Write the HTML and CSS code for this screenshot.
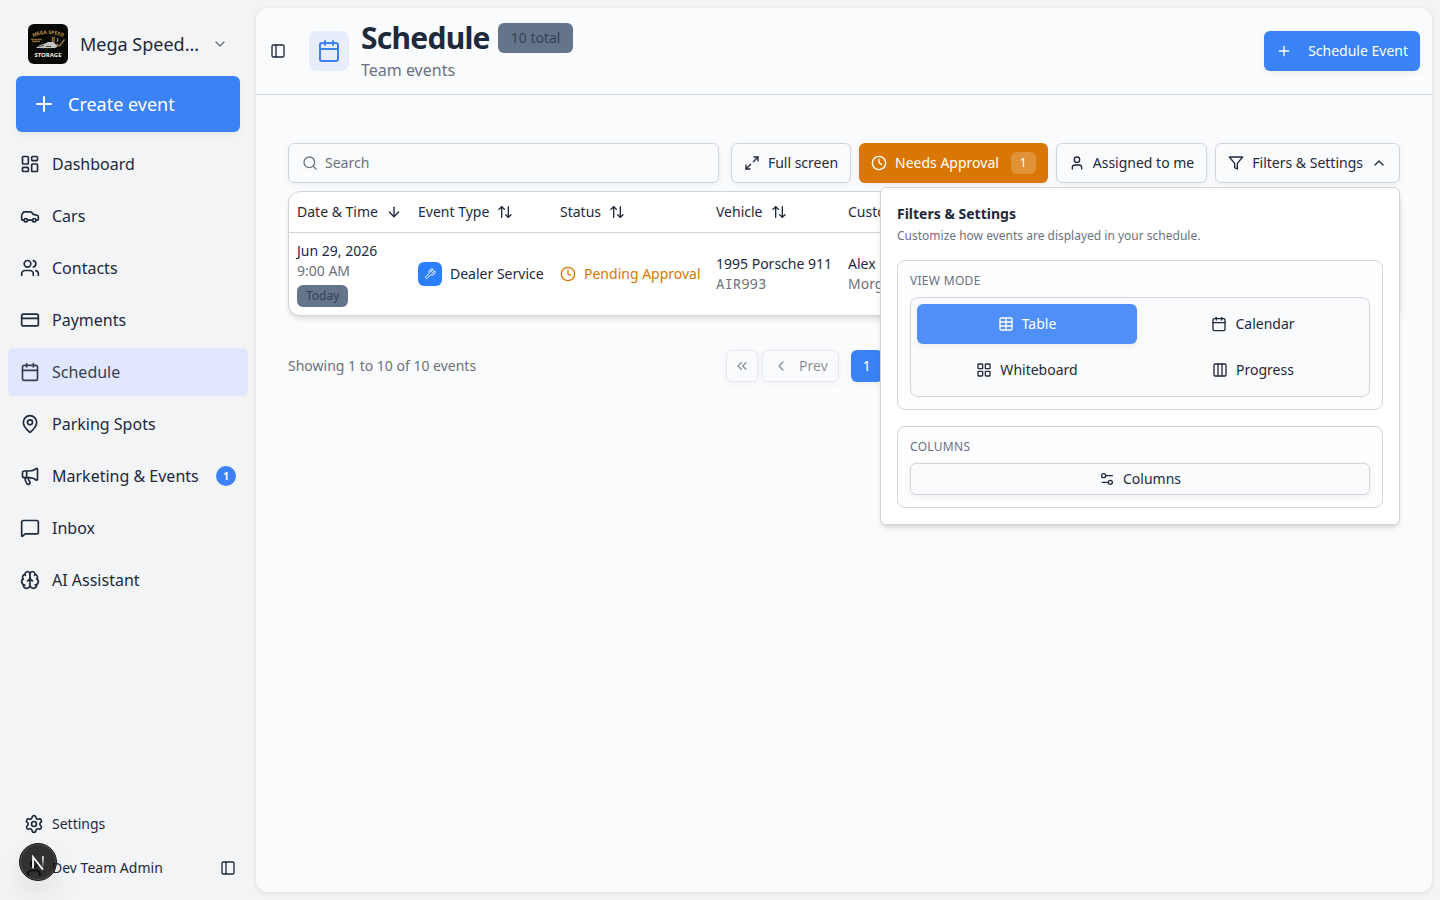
FILE: index.html
```html
<!DOCTYPE html>
<html lang="en">
<head>
<meta charset="utf-8">
<meta name="viewport" content="width=device-width, initial-scale=1">
<title>Schedule</title>
<link rel="stylesheet" href="styles.css">
</head>
<body>
<svg class="sprite" aria-hidden="true">
  <symbol id="chevron-down" viewBox="0 0 24 24"><path d="m6 9 6 6 6-6"/></symbol>
  <symbol id="chevron-up" viewBox="0 0 24 24"><path d="m18 15-6-6-6 6"/></symbol>
  <symbol id="chevron-left" viewBox="0 0 24 24"><path d="m15 18-6-6 6-6"/></symbol>
  <symbol id="chevrons-left" viewBox="0 0 24 24"><path d="m11 17-5-5 5-5"/><path d="m18 17-5-5 5-5"/></symbol>
  <symbol id="plus" viewBox="0 0 24 24"><path d="M5 12h14"/><path d="M12 5v14"/></symbol>
  <symbol id="dashboard" viewBox="0 0 24 24"><rect width="7" height="9" x="3" y="3" rx="1"/><rect width="7" height="5" x="14" y="3" rx="1"/><rect width="7" height="9" x="14" y="12" rx="1"/><rect width="7" height="5" x="3" y="16" rx="1"/></symbol>
  <symbol id="car" viewBox="0 0 24 24"><path d="M19 17h2c.6 0 1-.4 1-1v-3c0-.9-.7-1.7-1.5-1.9C18.7 10.6 16 10 16 10s-1.3-1.4-2.2-2.3c-.5-.4-1.1-.7-1.8-.7H5c-.6 0-1.1.4-1.4.9l-1.4 2.9A3.7 3.7 0 0 0 2 12v4c0 .6.4 1 1 1h2"/><circle cx="7" cy="17" r="2"/><path d="M9 17h6"/><circle cx="17" cy="17" r="2"/></symbol>
  <symbol id="users" viewBox="0 0 24 24"><path d="M16 21v-2a4 4 0 0 0-4-4H6a4 4 0 0 0-4 4v2"/><circle cx="9" cy="7" r="4"/><path d="M22 21v-2a4 4 0 0 0-3-3.87"/><path d="M16 3.13a4 4 0 0 1 0 7.75"/></symbol>
  <symbol id="card" viewBox="0 0 24 24"><rect width="20" height="14" x="2" y="5" rx="2"/><path d="M2 10h20"/></symbol>
  <symbol id="calendar" viewBox="0 0 24 24"><path d="M8 2v4"/><path d="M16 2v4"/><rect width="18" height="18" x="3" y="4" rx="2"/><path d="M3 10h18"/></symbol>
  <symbol id="pin" viewBox="0 0 24 24"><path d="M20 10c0 4.993-5.539 10.193-7.399 11.799a1 1 0 0 1-1.202 0C9.539 20.193 4 14.993 4 10a8 8 0 0 1 16 0"/><circle cx="12" cy="10" r="3"/></symbol>
  <symbol id="megaphone" viewBox="0 0 24 24"><path d="M11 6a13 13 0 0 0 8.4-2.8A1 1 0 0 1 21 4v12a1 1 0 0 1-1.6.8A13 13 0 0 0 11 14H5a2 2 0 0 1-2-2V8a2 2 0 0 1 2-2z"/><path d="M6 14a12 12 0 0 0 2.4 7.2 2 2 0 0 0 3.2-2.4A8 8 0 0 1 10 14"/><path d="M8 6v8"/></symbol>
  <symbol id="message" viewBox="0 0 24 24"><path d="M22 17a2 2 0 0 1-2 2H6.828a2 2 0 0 0-1.414.586l-2.202 2.202A.71.71 0 0 1 2 21.286V5a2 2 0 0 1 2-2h16a2 2 0 0 1 2 2z"/></symbol>
  <symbol id="brain" viewBox="0 0 24 24"><path d="M12 18V5"/><path d="M15 13a4.17 4.17 0 0 1-3-4 4.17 4.17 0 0 1-3 4"/><path d="M17.598 6.500A3 3 0 1 0 12 5a3 3 0 1 0-5.598 1.500"/><path d="M17.997 5.125a4 4 0 0 1 2.526 5.770"/><path d="M18 18a4 4 0 0 0 2-7.464"/><path d="M19.967 17.483A4 4 0 1 1 12 18a4 4 0 1 1-7.967-.517"/><path d="M6 18a4 4 0 0 1-2-7.464"/><path d="M6.003 5.125a4 4 0 0 0-2.526 5.770"/></symbol>
  <symbol id="gear" viewBox="0 0 24 24"><path d="M9.671 4.136a2.34 2.34 0 0 1 4.659 0 2.34 2.34 0 0 0 3.319 1.915 2.34 2.34 0 0 1 2.33 4.033 2.34 2.34 0 0 0 0 3.831 2.34 2.34 0 0 1-2.33 4.033 2.34 2.34 0 0 0-3.319 1.915 2.34 2.34 0 0 1-4.659 0 2.34 2.34 0 0 0-3.32-1.915 2.34 2.34 0 0 1-2.33-4.033 2.34 2.34 0 0 0 0-3.831A2.34 2.34 0 0 1 6.35 6.051a2.34 2.34 0 0 0 3.319-1.915"/><circle cx="12" cy="12" r="3"/></symbol>
  <symbol id="user" viewBox="0 0 24 24"><path d="M19 21v-2a4 4 0 0 0-4-4H9a4 4 0 0 0-4 4v2"/><circle cx="12" cy="7" r="4"/></symbol>
  <symbol id="panel" viewBox="0 0 24 24"><rect width="18" height="18" x="3" y="3" rx="2"/><path d="M9 3v18"/></symbol>
  <symbol id="search" viewBox="0 0 24 24"><path d="m21 21-4.34-4.34"/><circle cx="11" cy="11" r="8"/></symbol>
  <symbol id="expand" viewBox="0 0 24 24"><path d="M15 3h6v6"/><path d="m21 3-7 7"/><path d="m3 21 7-7"/><path d="M9 21H3v-6"/></symbol>
  <symbol id="clock" viewBox="0 0 24 24"><circle cx="12" cy="12" r="10"/><path d="M12 6v6l4 2"/></symbol>
  <symbol id="filter" viewBox="0 0 24 24"><path d="M22 3H2l8 9.46V19l4 2v-8.54z"/></symbol>
  <symbol id="arrow-down" viewBox="0 0 24 24"><path d="M12 5v14"/><path d="m19 12-7 7-7-7"/></symbol>
  <symbol id="sort" viewBox="0 0 24 24"><path d="m21 16-4 4-4-4"/><path d="M17 20V4"/><path d="m3 8 4-4 4 4"/><path d="M7 4v16"/></symbol>
  <symbol id="wrench" viewBox="0 0 24 24"><path d="M14.7 6.3a1 1 0 0 0 0 1.4l1.6 1.6a1 1 0 0 0 1.4 0l3.77-3.77a6 6 0 0 1-7.94 7.94l-6.91 6.91a2.12 2.12 0 0 1-3-3l6.91-6.91a6 6 0 0 1 7.94-7.94l-3.76 3.76z"/></symbol>
  <symbol id="table" viewBox="0 0 24 24"><path d="M12 3v18"/><rect width="18" height="18" x="3" y="3" rx="2"/><path d="M3 9h18"/><path d="M3 15h18"/></symbol>
  <symbol id="grid" viewBox="0 0 24 24"><rect width="7" height="7" x="3" y="3" rx="1"/><rect width="7" height="7" x="14" y="3" rx="1"/><rect width="7" height="7" x="14" y="14" rx="1"/><rect width="7" height="7" x="3" y="14" rx="1"/></symbol>
  <symbol id="columns" viewBox="0 0 24 24"><rect width="18" height="18" x="3" y="3" rx="2"/><path d="M9 3v18"/><path d="M15 3v18"/></symbol>
  <symbol id="sliders" viewBox="0 0 24 24"><path d="M20 7h-9"/><path d="M14 17H5"/><circle cx="17" cy="17" r="3"/><circle cx="7" cy="7" r="3"/></symbol>
</svg>

<aside class="sidebar">
  <button class="team" type="button">
    <svg class="team-logo" viewBox="0 0 40 40" role="img" aria-label="Mega Speed Storage">
      <defs><path id="arch" d="M2 14.500Q20 5.500 38 14.500"/></defs>
      <rect width="40" height="40" fill="#080804"/>
      <text class="logo-top"><textPath href="#arch" startOffset="50%" text-anchor="middle">MEGA SPEED</textPath></text>
      <path d="M3 15.500h11M4 17.500h8" stroke="#7d6136" stroke-width="1.400"/>
      <path d="M24.500 13v6M26 12.500v7" stroke="#9a7640" stroke-width="1.200"/>
      <path d="M36.500 15.500l-5 6.500-3-2" fill="none" stroke="#9a7640" stroke-width="1.400"/>
      <path d="M8 24q3-3.500 8-4l4-2h5l3 2.500 2 2-3 1.500z" fill="#c4c3bd"/>
      <path d="M10 22.500l6-1M18 22.500h5M12 24.500h12" stroke="#2a2924" stroke-width=".8"/>
      <path d="M29 14l1 2-1 2" fill="none" stroke="#d7d4ca" stroke-width=".8"/>
      <text class="logo-bottom" x="20" y="32.500" text-anchor="middle">STORAGE</text>
    </svg>
    <span class="team-name">Mega Speed...</span>
    <svg class="icon muted"><use href="#chevron-down"/></svg>
  </button>

  <button class="create" type="button"><svg class="icon icon-lg"><use href="#plus"/></svg>Create event</button>

  <nav class="nav">
    <a class="nav-link" href="#"><svg class="icon icon-md"><use href="#dashboard"/></svg>Dashboard</a>
    <a class="nav-link" href="#"><svg class="icon icon-md"><use href="#car"/></svg>Cars</a>
    <a class="nav-link" href="#"><svg class="icon icon-md"><use href="#users"/></svg>Contacts</a>
    <a class="nav-link" href="#"><svg class="icon icon-md"><use href="#card"/></svg>Payments</a>
    <a class="nav-link active" href="#" aria-current="page"><svg class="icon icon-md"><use href="#calendar"/></svg>Schedule</a>
    <a class="nav-link" href="#"><svg class="icon icon-md"><use href="#pin"/></svg>Parking Spots</a>
    <a class="nav-link" href="#"><svg class="icon icon-md"><use href="#megaphone"/></svg>Marketing &amp; Events<span class="count">1</span></a>
    <a class="nav-link" href="#"><svg class="icon icon-md"><use href="#message"/></svg>Inbox</a>
    <a class="nav-link" href="#"><svg class="icon icon-md"><use href="#brain"/></svg>AI Assistant</a>
  </nav>

  <footer class="side-footer">
    <a class="foot-link" href="#"><svg class="icon icon-md"><use href="#gear"/></svg>Settings</a>
    <div class="foot-row">
      <a class="foot-link" href="#"><svg class="icon icon-md"><use href="#user"/></svg>Dev Team Admin</a>
      <button class="ghost" type="button" aria-label="Collapse sidebar"><svg class="icon"><use href="#panel"/></svg></button>
    </div>
  </footer>
</aside>

<main class="main">
  <header class="header">
    <button class="ghost" type="button" aria-label="Toggle sidebar"><svg class="icon"><use href="#panel"/></svg></button>
    <span class="page-icon"><svg class="icon icon-lg"><use href="#calendar"/></svg></span>
    <div class="heading">
      <div class="title-row"><h1 class="title">Schedule</h1><span class="badge">10 total</span></div>
      <p class="subtitle">Team events</p>
    </div>
    <button class="btn primary" type="button"><svg class="icon"><use href="#plus"/></svg>Schedule Event</button>
  </header>

  <div class="content">
    <div class="toolbar">
      <label class="search"><svg class="icon"><use href="#search"/></svg><input class="search-input" type="text" placeholder="Search" aria-label="Search"></label>
      <div class="actions">
        <button class="btn outline" type="button"><svg class="icon"><use href="#expand"/></svg>Full screen</button>
        <button class="btn warn" type="button"><svg class="icon"><use href="#clock"/></svg>Needs Approval<span class="pill">1</span></button>
        <button class="btn outline" type="button"><svg class="icon"><use href="#user"/></svg>Assigned to me</button>
        <div class="filters">
          <button class="btn outline" type="button" aria-expanded="true"><svg class="icon"><use href="#filter"/></svg>Filters &amp; Settings<svg class="icon"><use href="#chevron-up"/></svg></button>
          <section class="popover" aria-label="Filters and settings">
            <div class="pop-head">
              <h2 class="pop-title">Filters &amp; Settings</h2>
              <p class="pop-text">Customize how events are displayed in your schedule.</p>
            </div>
            <div class="group">
              <h3 class="group-label">View mode</h3>
              <div class="modes">
                <button class="mode selected" type="button" aria-pressed="true"><svg class="icon"><use href="#table"/></svg>Table</button>
                <button class="mode" type="button"><svg class="icon"><use href="#calendar"/></svg>Calendar</button>
                <button class="mode" type="button"><svg class="icon"><use href="#grid"/></svg>Whiteboard</button>
                <button class="mode" type="button"><svg class="icon"><use href="#columns"/></svg>Progress</button>
              </div>
            </div>
            <div class="group">
              <h3 class="group-label">Columns</h3>
              <button class="btn outline small" type="button"><svg class="icon"><use href="#sliders"/></svg>Columns</button>
            </div>
          </section>
        </div>
      </div>
    </div>

    <div class="table-card">
      <table class="events">
        <thead>
          <tr>
            <th class="col-date"><button class="sort" type="button">Date &amp; Time<svg class="icon"><use href="#arrow-down"/></svg></button></th>
            <th class="col-type"><button class="sort" type="button">Event Type<svg class="icon"><use href="#sort"/></svg></button></th>
            <th class="col-status"><button class="sort" type="button">Status<svg class="icon"><use href="#sort"/></svg></button></th>
            <th class="col-vehicle"><button class="sort" type="button">Vehicle<svg class="icon"><use href="#sort"/></svg></button></th>
            <th>Customer</th>
          </tr>
        </thead>
        <tbody>
          <tr>
            <td>Jun 29, 2026<div class="soft">9:00 AM</div><span class="badge tag">Today</span></td>
            <td><div class="with-icon"><span class="type-icon"><svg class="icon icon-xs"><use href="#wrench"/></svg></span>Dealer Service</div></td>
            <td><div class="with-icon pending"><svg class="icon"><use href="#clock"/></svg>Pending Approval</div></td>
            <td>1995 Porsche 911<div class="soft mono">AIR993</div></td>
            <td>Alex<div class="soft">Morgan</div></td>
          </tr>
        </tbody>
      </table>
    </div>

    <div class="paging">
      <p class="summary">Showing 1 to 10 of 10 events</p>
      <div class="pager">
        <button class="btn outline small square" type="button" disabled aria-label="First page"><svg class="icon"><use href="#chevrons-left"/></svg></button>
        <button class="btn outline small prev" type="button" disabled><svg class="icon"><use href="#chevron-left"/></svg>Prev</button>
        <button class="btn primary small square current" type="button" aria-current="page">1</button>
      </div>
    </div>
  </div>
</main>

<button class="dev-badge" type="button" aria-label="Developer tools">
  <svg class="dev-mark" viewBox="0 0 40 40" fill="none">
    <defs>
      <linearGradient id="fade-b" x1="26" y1="13" x2="26" y2="27" gradientUnits="userSpaceOnUse"><stop stop-color="#fff"/><stop offset="1" stop-color="#fff" stop-opacity="0"/></linearGradient>
    </defs>
    <path d="M14.500 27V14.500L25.500 28.500" stroke="#fff" stroke-width="2"/>
    <path d="M25.500 13.500V26" stroke="url(#fade-b)" stroke-width="2"/>
  </svg>
</button>
</body>
</html>
```

FILE: styles.css
```css
:root {
  --text: #1e293b;
  --text-soft: #6b7280;
  --border: #d1d5db;
  --surface: #fafbfd;
  --primary: #3b82f6;
  --shadow: 0 2px 6px rgba(0, 0, 0, .06);
}

* { box-sizing: border-box; }

body {
  margin: 0;
  min-height: 100vh;
  display: flex;
  background: #f3f4f6;
  color: var(--text);
  font: 14px/20px "Noto Sans", "Open Sans", sans-serif;
}

h1, h2, h3, p { margin: 0; }
a { color: inherit; text-decoration: none; }
button { font: inherit; color: inherit; background: none; border: 0; padding: 0; }

.sprite { position: absolute; width: 0; height: 0; }

.icon {
  width: 16px;
  height: 16px;
  flex: none;
  fill: none;
  stroke: currentColor;
  stroke-width: 2;
  stroke-linecap: round;
  stroke-linejoin: round;
}
.icon-xs { width: 12px; height: 12px; }
.icon-md { width: 20px; height: 20px; }
.icon-lg { width: 24px; height: 24px; }
.muted { color: var(--text-soft); }

/* Sidebar */
.sidebar {
  width: 256px;
  flex: none;
  display: flex;
  flex-direction: column;
  padding: 8px;
}
.team {
  display: flex;
  align-items: center;
  gap: 12px;
  margin: 8px 8px 0;
  padding: 8px 12px;
  font-size: 18px;
  line-height: 28px;
  text-align: left;
}
.team-logo { width: 40px; height: 40px; border-radius: 6px; flex: none; }
.team-name { flex: 1; white-space: nowrap; }
.logo-top { font: bold 5px "Noto Sans", sans-serif; fill: #b98d4f; }
.logo-bottom { font: bold 6px "Noto Sans", sans-serif; fill: #f1efe8; }
.create {
  display: flex;
  align-items: center;
  gap: 12px;
  height: 56px;
  margin: 4px 8px 8px;
  padding: 0 16px;
  border-radius: 6px;
  background: var(--primary);
  box-shadow: var(--shadow);
  color: #fff;
  font-size: 18px;
}
.nav { display: flex; flex-direction: column; gap: 4px; }
.nav-link {
  display: flex;
  align-items: center;
  gap: 12px;
  height: 48px;
  padding: 0 12px;
  border-radius: 6px;
  font-size: 16px;
}
.nav-link.active { background: #e0e7ff; color: #374151; }
.count {
  margin-left: auto;
  width: 20px;
  height: 20px;
  border-radius: 50%;
  background: var(--primary);
  color: #fff;
  font-size: 10px;
  font-weight: 700;
  text-align: center;
}
.side-footer { margin-top: auto; padding: 0 8px 4px; display: flex; flex-direction: column; gap: 4px; }
.foot-link { display: flex; align-items: center; gap: 8px; height: 40px; padding: 0 8px; }
.foot-row { display: flex; align-items: center; justify-content: space-between; }
.ghost { display: grid; place-items: center; width: 28px; height: 28px; border-radius: 6px; }
.foot-row .ghost { margin-right: -2px; }

/* Main panel */
.main {
  flex: 1;
  min-width: 0;
  margin: 8px 8px 8px 0;
  border-radius: 12px;
  background: var(--surface);
  box-shadow: 0 1px 6px rgba(0, 0, 0, .09);
}
.header {
  display: flex;
  align-items: center;
  padding: 12px 12px 12px 8px;
  border-bottom: 1px solid var(--border);
}
.page-icon {
  display: grid;
  place-items: center;
  width: 40px;
  height: 40px;
  margin: 0 12px 0 17px;
  border-radius: 8px;
  background: #e7edfb;
  color: var(--primary);
}
.heading { flex: 1; display: flex; flex-direction: column; gap: 2px; }
.title-row { display: flex; align-items: center; gap: 8px; }
.title { font-size: 30px; line-height: 36px; font-weight: 700; letter-spacing: -0.025em; }
.subtitle { font-size: 16px; line-height: 24px; color: var(--text-soft); }
.badge {
  display: inline-block;
  padding: 5px 13px;
  border-radius: 6px;
  background: #64748b;
  color: #374151;
}

.btn {
  display: inline-flex;
  align-items: center;
  justify-content: center;
  gap: 8px;
  height: 40px;
  padding: 0 12px;
  border-radius: 6px;
  box-shadow: var(--shadow);
  white-space: nowrap;
}
.outline { border: 1px solid var(--border); background: var(--surface); }
.primary { background: var(--primary); color: #fff; gap: 16px; }
.warn { background: #d97706; color: #fff; }
.small { height: 32px; }
.square { width: 32px; padding: 0; }
.pill {
  margin-left: 4px;
  padding: 3px 9px;
  border-radius: 6px;
  background: rgba(255, 255, 255, .2);
  font-size: 12px;
  line-height: 16px;
}

.content { padding: 48px 32px; }
.toolbar { display: flex; gap: 12px; margin-bottom: 8px; }
.search {
  flex: 1;
  min-width: 0;
  display: flex;
  align-items: center;
  gap: 7px;
  padding: 0 13px;
  border: 1px solid var(--border);
  border-radius: 6px;
  box-shadow: var(--shadow);
  color: var(--text-soft);
}
.search-input { flex: 1; min-width: 0; padding: 0; border: 0; outline: 0; background: none; font: inherit; color: var(--text); }
.search-input::placeholder { color: var(--text-soft); opacity: 1; }
.actions { display: flex; gap: 8px; }
.filters { position: relative; }

/* Filters popover */
.popover {
  position: absolute;
  z-index: 2;
  top: calc(100% + 4px);
  right: 0;
  width: 520px;
  display: flex;
  flex-direction: column;
  gap: 16px;
  padding: 16px;
  border: 1px solid var(--border);
  border-radius: 6px;
  background: #fff;
  box-shadow: 0 4px 6px -1px rgba(0, 0, 0, .1), 0 2px 4px -2px rgba(0, 0, 0, .1);
}
.pop-head { display: flex; flex-direction: column; gap: 4px; }
.pop-title { font-size: 14px; line-height: 20px; font-weight: 700; }
.pop-text { font-size: 12px; line-height: 16px; color: var(--text-soft); }
.group {
  display: flex;
  flex-direction: column;
  gap: 8px;
  padding: 12px;
  border: 1px solid var(--border);
  border-radius: 8px;
  background: #fdfdfe;
}
.group-label {
  font-size: 12px;
  line-height: 16px;
  font-weight: 400;
  letter-spacing: 0.025em;
  text-transform: uppercase;
  color: var(--text-soft);
}
.modes {
  display: grid;
  grid-template-columns: 1fr 1fr;
  gap: 6px;
  padding: 6px;
  border: 1px solid var(--border);
  border-radius: 8px;
  background: var(--surface);
}
.mode { display: flex; align-items: center; justify-content: center; gap: 8px; height: 40px; border-radius: 6px; }
.mode.selected { background: #4f8ff7; color: #fff; box-shadow: var(--shadow); }

/* Events table */
.table-card {
  overflow: hidden;
  border: 1px solid var(--border);
  border-radius: 12px;
  background: #fff;
  box-shadow: 0 4px 6px -1px rgba(0, 0, 0, .1), 0 2px 4px -2px rgba(0, 0, 0, .1);
}
.events { width: 100%; table-layout: fixed; border-collapse: separate; border-spacing: 0; white-space: nowrap; }
.events th { height: 41px; padding: 0 8px; border-bottom: 1px solid var(--border); font-weight: 400; text-align: left; }
.events td { padding: 8px; vertical-align: middle; }
.col-date { width: 121px; }
.col-type { width: 142px; }
.col-status { width: 156px; }
.col-vehicle { width: 132px; }
.sort, .with-icon { display: flex; align-items: center; gap: 8px; }
.soft { color: var(--text-soft); }
.mono { font-family: "Noto Sans Mono", "DejaVu Sans Mono", monospace; }
.tag { display: block; width: fit-content; margin-top: 4px; padding: 3px 9px; font-size: 12px; line-height: 16px; }
.type-icon { display: grid; place-items: center; width: 24px; height: 24px; border-radius: 6px; background: #2b7fff; color: #fff; }
.pending { color: #d97706; }

/* Pagination */
.paging { display: grid; grid-template-columns: 13fr 20fr; align-items: center; margin-top: 34px; }
.summary { color: var(--text-soft); }
.pager { display: flex; gap: 4px; }
.pager .btn:disabled { opacity: .5; }
.prev { gap: 10px; padding: 0 10px; }
.current { margin-left: 8px; }

/* Floating developer button */
.dev-badge {
  position: fixed;
  left: 19px;
  bottom: 19px;
  width: 38px;
  height: 38px;
  border: 1px solid #171717;
  border-radius: 50%;
  background: rgba(0, 0, 0, .8);
  box-shadow: inset 0 0 0 1px rgba(255, 255, 255, .14), 0 16px 32px -8px rgba(0, 0, 0, .24);
}
.dev-mark { display: block; width: 36px; height: 36px; }
```
